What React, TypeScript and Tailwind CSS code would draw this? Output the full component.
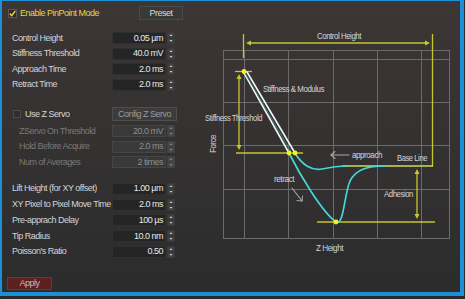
import React from "react";

const Spinner = ({ disabled = false }: { disabled?: boolean }) => (
  <svg width="8" height="12" viewBox="0 0 8 12" className="ml-[1px] shrink-0">
    <rect x="0" y="0" width="8" height="12" fill={disabled ? "#3e3e3e" : "#343434"} />
    <rect x="0.5" y="0.5" width="7" height="5" fill={disabled ? "#474747" : "#404040"} />
    <rect x="0.5" y="6.5" width="7" height="5" fill={disabled ? "#474747" : "#404040"} />
    <path d="M2.5 4 L4 2.3 L5.5 4 Z" fill={disabled ? "#8a8a8a" : "#d0d0d0"} />
    <path d="M2.5 8 L4 9.7 L5.5 8 Z" fill={disabled ? "#8a8a8a" : "#d0d0d0"} />
  </svg>
);

type RowProps = { label: string; value: string; disabled?: boolean; indent?: boolean; h: string };

const Row = ({ label, value, disabled, indent, h }: RowProps) => (
  <div className={`flex items-center ${h}`}>
    <div
      className={`w-[100px] whitespace-nowrap ${indent ? "pl-[7px]" : ""} ${
        disabled ? "text-[#7a7a7a]" : "text-[#d4d4d4]"
      }`}
    >
      {label}
    </div>
    <div
      className={`w-[54px] h-[12px] flex items-center justify-end pr-[2px] border whitespace-nowrap ${
        disabled
          ? "bg-[#393939] border-[#464646] text-[#8e8e8e]"
          : "bg-[#252525] border-[#303030] text-[#e8e8e8]"
      }`}
    >
      {value}
    </div>
    <Spinner disabled={disabled} />
  </div>
);

const Y = "#c6c62e";

const Chart = () => (
  <svg width="258" height="290" viewBox="200 1 258 290" className="block">
    <g stroke="#6b6b6b" strokeWidth="1" fill="none">
      <rect x="223.5" y="50.5" width="226" height="188" />
      {[244.5, 288.5, 333.5, 377.5, 421.5].map((x) => (
        <line key={x} x1={x} y1="50.5" x2={x} y2="238.5" />
      ))}
      {[59.5, 102.5, 145.5, 189.5].map((y) => (
        <line key={y} x1="223.5" y1={y} x2="449.5" y2={y} />
      ))}
    </g>

    <g stroke={Y} strokeWidth="1.3" fill="none">
      <line x1="243.5" y1="34" x2="243.5" y2="58" />
      <line x1="432.5" y1="34" x2="432.5" y2="166.5" />
      <line x1="249" y1="43" x2="427" y2="43" />
      <line x1="235" y1="71.5" x2="252" y2="71.5" />
      <line x1="239" y1="77" x2="239" y2="147" />
      <line x1="236" y1="153" x2="303" y2="153" />
      <line x1="417" y1="172" x2="417" y2="216" />
      <line x1="317" y1="222" x2="435" y2="222" />
    </g>
    <g fill={Y}>
      <path d="M246 43 L251 40.5 L251 45.5 Z" />
      <path d="M430 43 L425 40.5 L425 45.5 Z" />
      <path d="M239 74 L236.5 79 L241.5 79 Z" />
      <path d="M239 150 L236.5 145 L241.5 145 Z" />
      <path d="M417 169 L414.5 174 L419.5 174 Z" />
      <path d="M417 219 L414.5 214 L419.5 214 Z" />
    </g>
    <line x1="342" y1="166" x2="433" y2="166" stroke="#cbdc5a" strokeWidth="1.6" />

    <g stroke="#45d6d8" strokeWidth="1.7" fill="none" strokeLinecap="round">
      <path d="M295 153 C302 165 312 171 322 169 C332 167 337 166 346 166" />
      <path d="M289 153 C300 175 322 212 336 222 C344 226 344 195 350 181 C356 169 368 166 385 166" />
    </g>

    <g strokeLinecap="round">
      <line x1="243.5" y1="72" x2="289" y2="153" stroke="#f4f4f4" strokeWidth="1.6" />
      <line x1="247" y1="72" x2="295" y2="153" stroke="#f4f4f4" strokeWidth="1.6" />
      <line x1="245.5" y1="74" x2="291.8" y2="153" stroke="#2f8f90" strokeWidth="0.9" />
    </g>

    <g fill="#f6f21c">
      <circle cx="244" cy="71.5" r="2.4" />
      <circle cx="289" cy="153" r="2.4" />
      <circle cx="295" cy="153" r="2.4" />
      <circle cx="336" cy="222" r="2.4" />
    </g>

    <g stroke="#a8a8a8" strokeWidth="1.1" fill="none" strokeLinecap="round">
      <line x1="349" y1="155" x2="331" y2="155" />
      <path d="M335 151.5 L331 155 L335 158.5" />
      <line x1="292" y1="188" x2="302" y2="201" />
      <path d="M297 200.5 L302 201 L302.5 196" />
    </g>

    <g fill="#d6d6d6" fontSize="9" fontFamily="'Liberation Sans',Arial,sans-serif">
      <text x="317" y="38.5" textLength="44" lengthAdjust="spacingAndGlyphs">Control Height</text>
      <text x="263" y="92" textLength="61" lengthAdjust="spacingAndGlyphs">Stiffness &amp; Modulus</text>
      <text x="205" y="121" textLength="57" lengthAdjust="spacingAndGlyphs">Stiffness Threshold</text>
      <text x="0" y="0" transform="translate(216 153) rotate(-90)" textLength="18" lengthAdjust="spacingAndGlyphs">Force</text>
      <text x="352" y="158" textLength="30" lengthAdjust="spacingAndGlyphs">approach</text>
      <text x="397" y="161" textLength="30" lengthAdjust="spacingAndGlyphs">Base Line</text>
      <text x="274" y="182" textLength="20" lengthAdjust="spacingAndGlyphs">retract</text>
      <text x="384" y="197" textLength="29" lengthAdjust="spacingAndGlyphs">Adhesion</text>
      <text x="316" y="250.5" textLength="27" lengthAdjust="spacingAndGlyphs">Z Height</text>
    </g>
  </svg>
);

export default function App() {
  return (
    <div className="w-[465px] h-[299px] bg-[#2a2a2a] pr-[1px] pb-[3px] font-['Liberation_Sans',Arial,sans-serif] text-[9px] tracking-[-0.5px] leading-none">
      <div className="w-full h-full border-[#1c8fd6] border-t-[1px] border-l-[2px] border-r-[4px] border-b-[4px]">
        <div className="h-full flex bg-gradient-to-b from-[#3c3634] via-[#343131] to-[#2c2c2c]">
          <div className="w-[198px] shrink-0 flex flex-col">
            <div className="flex items-center h-[14px] mt-[5px] pl-[6px]">
              <div className="w-[131px] flex items-center">
                <div className="w-[9px] h-[9px] bg-[#2a2a2a] border border-[#575757] flex items-center justify-center">
                  <svg width="7" height="7" viewBox="0 0 7 7">
                    <path d="M0.8 3.6 L2.7 5.6 L6.3 1" stroke="#ecd83a" strokeWidth="1.4" fill="none" />
                  </svg>
                </div>
                <span className="ml-[3px] text-[#e6d44a] whitespace-nowrap">Enable PinPoint Mode</span>
              </div>
              <div className="w-[44px] h-[14px] bg-[#393939] border border-[#4a4a4a] flex items-center justify-center text-[#d8d8d8] whitespace-nowrap">
                Preset
              </div>
            </div>

            <div className="pl-[10px] mt-[10.5px]">
              <Row h="h-[15.5px]" label="Control Height" value="0.05 µm" />
              <Row h="h-[15.5px]" label="Stiffness Threshold" value="40.0 mV" />
              <Row h="h-[15.5px]" label="Approach Time" value="2.0 ms" />
              <Row h="h-[15.5px]" label="Retract Time" value="2.0 ms" />
            </div>

            <div className="flex items-center h-[14px] mt-[14.5px] pl-[11px]">
              <div className="w-[99px] flex items-center">
                <div className="w-[8px] h-[8px] bg-[#2e2e2e] border border-[#4c4c4c]" />
                <span className="ml-[4px] text-[#d6d6d6] whitespace-nowrap">Use Z Servo</span>
              </div>
              <div className="w-[65px] h-[14px] bg-[#3c3c3c] border border-[#4e4e4e] flex items-center justify-center text-[#9a9a9a] whitespace-nowrap">
                Config Z Servo
              </div>
            </div>

            <div className="pl-[10px] mt-[2.25px]">
              <Row h="h-[15.5px]" label="ZServo On Threshold" value="20.0 mV" disabled indent />
              <Row h="h-[15.5px]" label="Hold Before Acquire" value="2.0 ms" disabled indent />
              <Row h="h-[15.5px]" label="Num of Averages" value="2 times" disabled indent />
            </div>

            <div className="pl-[10px] mt-[11.25px]">
              <Row h="h-[15.75px]" label="Lift Height (for XY offset)" value="1.00 µm" />
              <Row h="h-[15.75px]" label="XY Pixel to Pixel Move Time" value="2.0 ms" />
              <Row h="h-[15.75px]" label="Pre-apprach Delay" value="100 µs" />
              <Row h="h-[15.75px]" label="Tip Radius" value="10.0 nm" />
              <Row h="h-[15.75px]" label="Poisson's Ratio" value="0.50" />
            </div>

            <div className="pl-[5px] mt-[17.25px]">
              <div className="w-[45px] h-[13px] bg-[#5e1f1f] border border-[#7c3030] flex items-center justify-center text-[#d6b4b4]">
                Apply
              </div>
            </div>
          </div>

          <div className="flex-1">
            <Chart />
          </div>
        </div>
      </div>
    </div>
  );
}
